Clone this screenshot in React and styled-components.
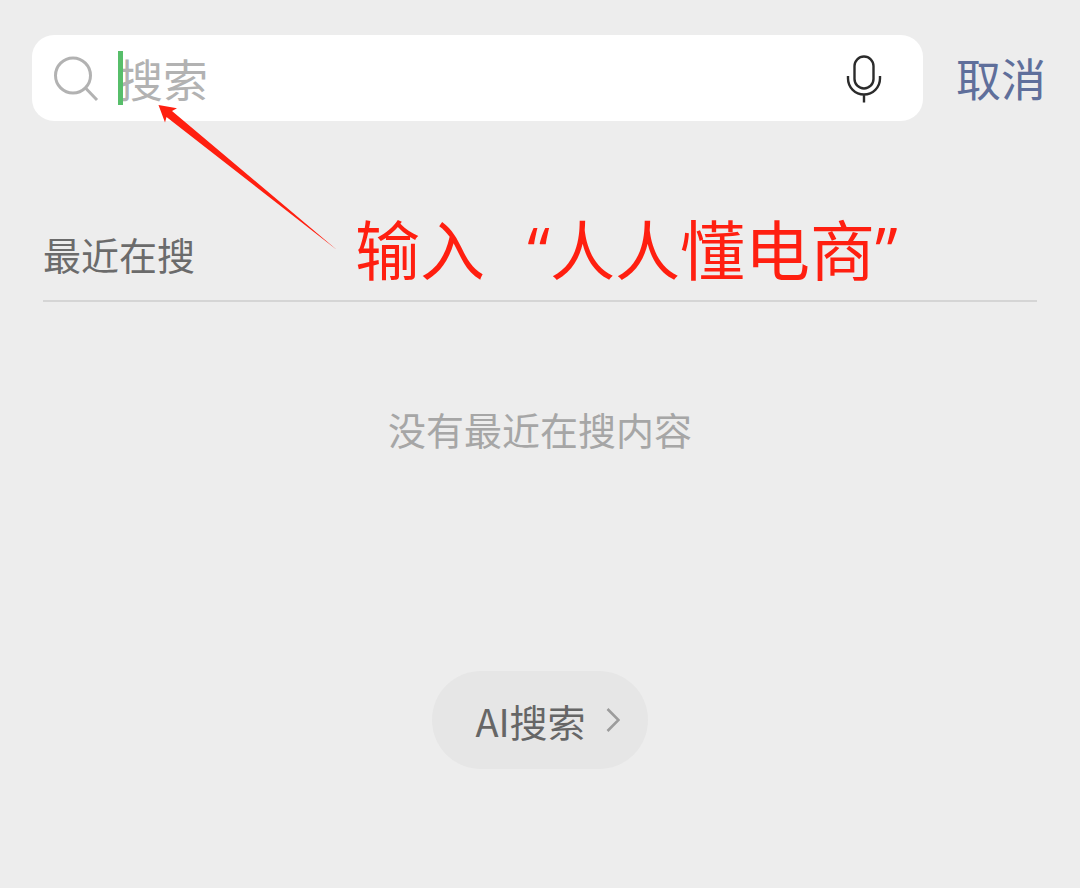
import React, { useState } from 'react';
import styled, { createGlobalStyle } from 'styled-components';


const GlobalStyle = createGlobalStyle`
    * {
        box-sizing: border-box;
    }
    body {
        margin: 0;
        background: #ededed;
        font-family: "Noto Sans CJK SC", sans-serif;
    }
    button {
        border: 0;
        padding: 0;
        background: none;
        font-family: inherit;
        cursor: pointer;
    }
`;

const Page = styled.div`
    position: relative;
    min-height: 100vh;
    padding: 35px 32px 0;
`;

const Header = styled.form`
    display: flex;
    align-items: center;
    gap: 33px;
    padding-right: 2px;
`;

const SearchBox = styled.div`
    display: flex;
    flex: 1;
    align-items: center;
    height: 86px;
    padding: 0 40px 0 20px;
    background: #fff;
    border-radius: 22px;
`;

const Field = styled.label`
    position: relative;
    display: flex;
    flex: 1;
    margin-left: 18px;
`;

const SearchInput = styled.input`
    width: 100%;
    height: 60px;
    padding: 0;
    border: 0;
    outline: 0;
    background: none;
    color: #333;
    caret-color: #57be6a;
    font-family: inherit;
    font-size: 45px;
    &::placeholder {
        color: #b2b2b2;
        opacity: 1;
    }
`;

const Caret = styled.span`
    position: absolute;
    left: 0;
    top: 3px;
    width: 5px;
    height: 54px;
    background: #57be6a;
`;

const MicButton = styled.button`
    display: flex;
`;

const Cancel = styled.button`
    color: #5f6f9b;
    font-size: 45px;
    line-height: 60px;
`;

const Recent = styled.section`
    margin: 106px 11px 0;
`;

const RecentTitle = styled.h2`
    margin: 0;
    padding-bottom: 19px;
    border-bottom: 2px solid #d5d5d5;
    color: #6b6b6b;
    font-size: 38px;
    font-weight: 400;
    line-height: 54px;
`;

const Empty = styled.p`
    margin: 99px 0 0;
    color: #a6a6a6;
    font-size: 38px;
    line-height: 56px;
    text-align: center;
`;

const AiButton = styled.button`
    display: flex;
    align-items: center;
    gap: 20px;
    height: 98px;
    margin: 214px auto 0;
    padding: 0 28px 0 43px;
    background: #e6e6e6;
    border-radius: 49px;
    color: #666;
    font-size: 38px;
`;

const Arrow = styled.svg`
    position: absolute;
    left: 156px;
    top: 102px;
    pointer-events: none;
`;

const Note = styled.p`
    position: absolute;
    left: 355px;
    top: 199px;
    margin: 0;
    color: #ff1f10;
    font-size: 65px;
    line-height: 96px;
    white-space: nowrap;
    pointer-events: none;
`;

const Quote = styled.span`
    display: inline-block;
    width: 1em;
    font-family: "Open Sans", sans-serif;
    line-height: 1;
    text-align: ${props => props.$align};
`;

const SearchIcon = () => (
    <svg width="48" height="48" viewBox="0 0 48 48" fill="none" stroke="#b2b2b2" strokeWidth="3" aria-hidden="true">
        <circle cx="21" cy="21.5" r="17.5" />
        <path d="M33.5 34L45 46" />
    </svg>
);

const MicIcon = () => (
    <svg width="38" height="50" viewBox="0 0 38 50" fill="none" stroke="#2b2b2b" strokeWidth="2.4" aria-hidden="true">
        <rect x="9.5" y="3.5" width="19" height="32" rx="9.5" />
        <path d="M3 23v2.5a16 16 0 0 0 32 0V23M19 41.5v8" />
    </svg>
);

const ChevronIcon = () => (
    <svg width="14" height="26" viewBox="0 0 14 26" fill="none" stroke="#9c9c9c" strokeWidth="2.6" aria-hidden="true">
        <path d="M1.5 2L12.5 13L1.5 24" />
    </svg>
);

const App = () => {
    const [query, setQuery] = useState('');

    return (
        <Page lang="zh-CN">
            <GlobalStyle />
            <Header onSubmit={e => e.preventDefault()}>
                <SearchBox>
                    <SearchIcon />
                    <Field>
                        <SearchInput
                            type="text"
                            placeholder="搜索"
                            aria-label="搜索"
                            value={query}
                            onChange={e => setQuery(e.target.value)}
                        />
                        {!query && <Caret />}
                    </Field>
                    <MicButton type="button" aria-label="语音">
                        <MicIcon />
                    </MicButton>
                </SearchBox>
                <Cancel type="button" onClick={() => setQuery('')}>取消</Cancel>
            </Header>

            <Recent>
                <RecentTitle>最近在搜</RecentTitle>
                <Empty>没有最近在搜内容</Empty>
            </Recent>

            <AiButton type="button">
                AI搜索
                <ChevronIcon />
            </AiButton>

            <Arrow width="184" height="152" viewBox="0 0 184 152" fill="#ff1f10" aria-hidden="true">
                <path d="M2.5 3L21 6.3L16 9L181 148L10.5 15L9 20.5Z" />
            </Arrow>
            <Note>
                输入<Quote $align="right">“</Quote>人人懂电商<Quote $align="left">”</Quote>
            </Note>
        </Page>
    );
};

export default App;
